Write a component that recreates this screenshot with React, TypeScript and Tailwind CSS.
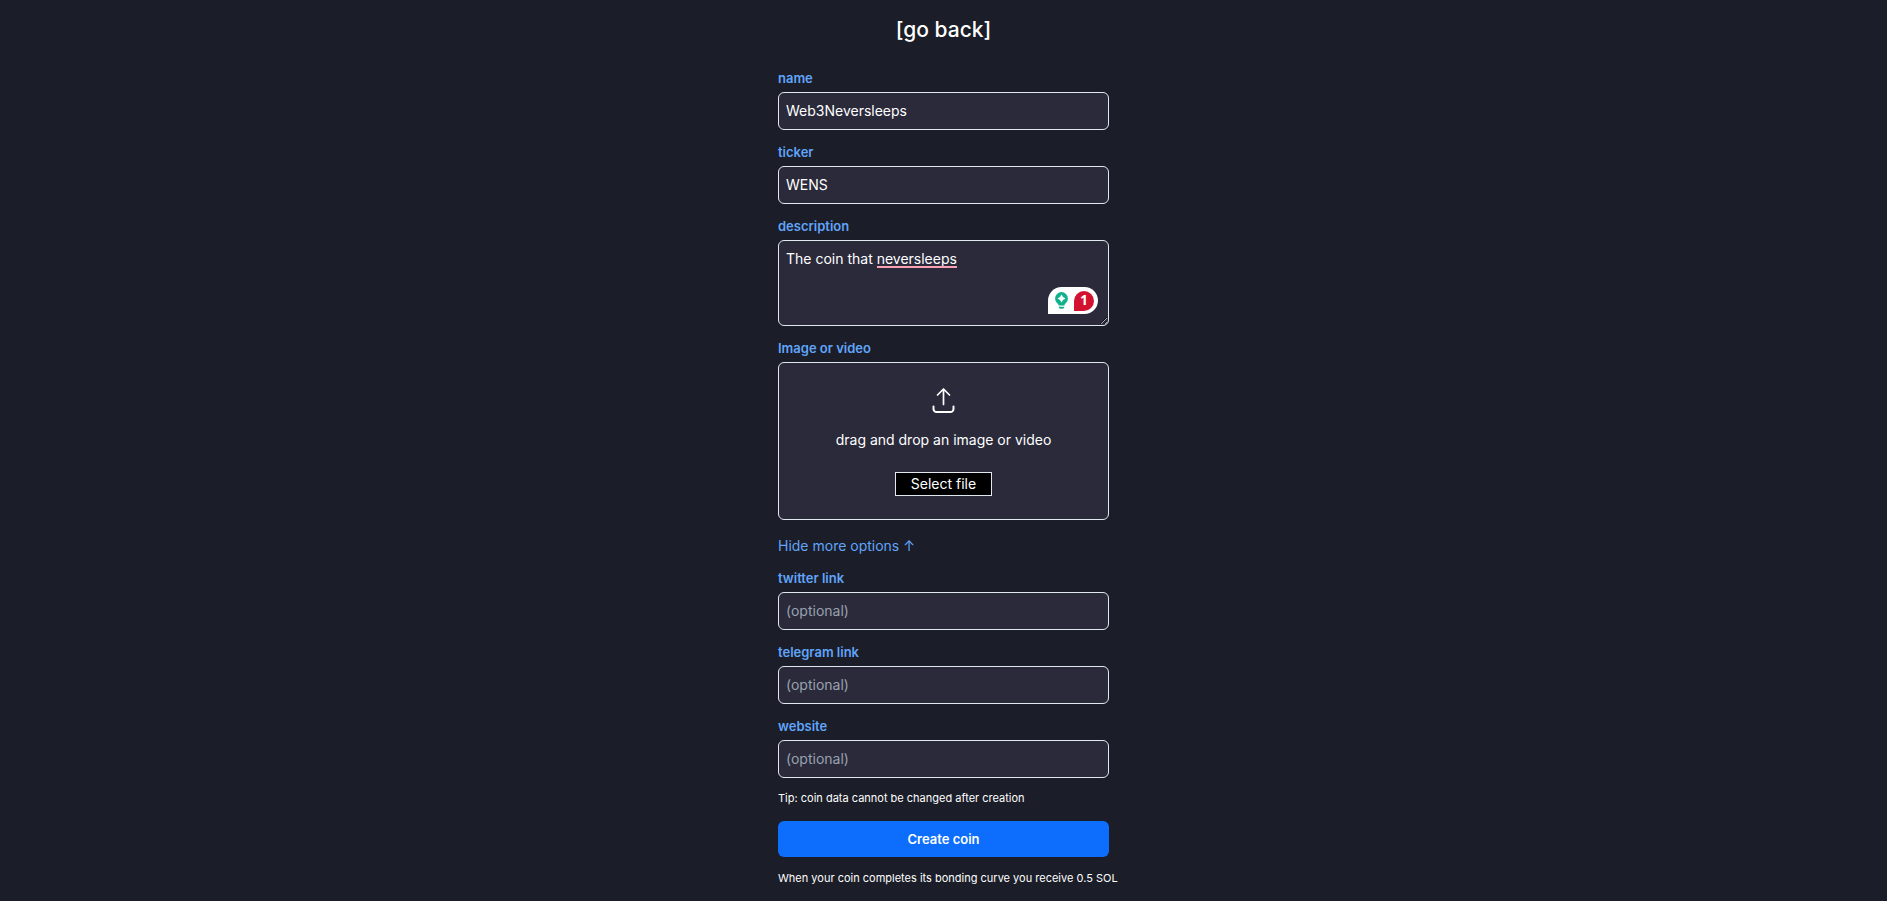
import React, { useRef, useState } from "react";

interface FieldProps {
  id: string;
  label: string;
  value: string;
  placeholder?: string;
  onChange: (value: string) => void;
}

function Field({ id, label, value, placeholder, onChange }: FieldProps) {
  return (
    <div className="flex flex-col gap-1">
      <label htmlFor={id} className="text-[13px] leading-5 font-semibold text-[#60a5fa]">
        {label}
      </label>
      <input
        id={id}
        type="text"
        value={value}
        placeholder={placeholder}
        onChange={(e) => onChange(e.target.value)}
        className="w-full bg-[#2a2a3b] border border-slate-200 rounded-md p-2 pl-[7px] text-sm text-white placeholder:text-gray-400 focus:outline-none"
      />
    </div>
  );
}

function UploadIcon() {
  return (
    <svg
      width="24"
      height="27"
      viewBox="0 0 24 27"
      fill="none"
      stroke="white"
      strokeWidth="2"
      strokeLinecap="round"
      strokeLinejoin="round"
      aria-hidden="true"
    >
      <path d="M11.5 17.5V2M5.5 8l6-6 6 6" strokeWidth="1.7" />
      <path d="M1.5 19.5V22a3 3 0 0 0 3 3h14a3 3 0 0 0 3-3v-2.5" />
    </svg>
  );
}

function WritingBadge() {
  return (
    <div className="absolute right-[11px] bottom-3 flex items-center gap-[6px] h-[27px] w-[50px] pl-[7px] bg-white rounded-full rounded-bl-none">
      <svg width="13" height="17" viewBox="0 0 13 17" aria-hidden="true">
        <circle cx="6.5" cy="6.5" r="6.4" fill="#0fb28c" />
        <path d="M2.5 10h8L9.3 13.6H3.7z" fill="#0fb28c" />
        <path
          d="M6.5 3.4l1 2.1 2.1 1-2.1 1-1 2.1-1-2.1-2.1-1 2.1-1z"
          fill="white"
          stroke="white"
          strokeWidth="1.2"
          strokeLinejoin="round"
        />
        <path d="M3.7 14.7h5.6v.3a1.8 1.8 0 0 1-1.8 1.8h-2a1.8 1.8 0 0 1-1.8-1.8z" fill="#0fb28c" />
      </svg>
      <span className="flex items-center justify-center size-5 bg-[#d3122f] rounded-full rounded-bl-none pb-[2px] font-['Open_Sans',sans-serif] text-sm leading-4 font-bold text-white">
        1
      </span>
    </div>
  );
}

function App() {
  const [name, setName] = useState("Web3Neversleeps");
  const [ticker, setTicker] = useState("WENS");
  const [description, setDescription] = useState("The coin that neversleeps");
  const [twitter, setTwitter] = useState("");
  const [telegram, setTelegram] = useState("");
  const [website, setWebsite] = useState("");
  const [showMore, setShowMore] = useState(true);
  const fileInput = useRef<HTMLInputElement>(null);

  return (
    <main className="min-h-screen bg-[#1b1d28] px-4 pt-[14px] pb-3 font-['Inter',sans-serif] text-white">
      <div className="flex flex-col mx-auto w-full max-w-[331px]">
        <a href="#" className="self-center text-[21px] leading-8 mb-[22px] font-medium">
          [go back]
        </a>

        <form className="flex flex-col gap-3" onSubmit={(e) => e.preventDefault()}>
          <Field id="name" label="name" value={name} onChange={setName} />
          <Field id="ticker" label="ticker" value={ticker} onChange={setTicker} />

          <div className="flex flex-col gap-1">
            <label htmlFor="description" className="text-[13px] leading-5 font-semibold text-[#60a5fa]">
              description
            </label>
            <div className="relative flex">
              <textarea
                id="description"
                spellCheck={false}
                value={description}
                onChange={(e) => setDescription(e.target.value)}
                className="w-full h-[86px] bg-[#2a2a3b] border border-slate-200 rounded-md p-2 pl-[7px] text-sm text-white focus:outline-none"
              />
              {/* spelling mark below the last word */}
              <span className="absolute left-[99px] top-[26px] w-20 h-[2px] bg-[#f9a0b4]" />
              <WritingBadge />
            </div>
          </div>

          <div className="flex flex-col gap-1">
            <label htmlFor="media" className="text-[13px] leading-5 font-semibold text-[#60a5fa]">
              Image or video
            </label>
            <div className="flex flex-col items-center h-[158px] bg-[#2a2a3b] border border-slate-200 rounded-md pt-6">
              <UploadIcon />
              <p className="text-sm mt-4">drag and drop an image or video</p>
              <input ref={fileInput} id="media" type="file" accept="image/*,video/*" className="hidden" />
              <button
                type="button"
                onClick={() => fileInput.current?.click()}
                className="mt-[22px] h-6 px-[15px] bg-black border border-slate-200 text-sm leading-5"
              >
                Select file
              </button>
            </div>
          </div>

          <button
            type="button"
            onClick={() => setShowMore(!showMore)}
            className="self-start mt-1 text-sm text-[#60a5fa]"
          >
            {showMore ? "Hide more options ↑" : "Show more options ↓"}
          </button>

          {showMore && (
            <>
              <Field
                id="twitter"
                label="twitter link"
                placeholder="(optional)"
                value={twitter}
                onChange={setTwitter}
              />
              <Field
                id="telegram"
                label="telegram link"
                placeholder="(optional)"
                value={telegram}
                onChange={setTelegram}
              />
              <Field
                id="website"
                label="website"
                placeholder="(optional)"
                value={website}
                onChange={setWebsite}
              />
            </>
          )}

          <p className="text-[11px] leading-4">Tip: coin data cannot be changed after creation</p>
          <button
            type="submit"
            className="h-9 mt-[3px] bg-[#0d6efd] rounded-md text-[13px] leading-5 font-semibold"
          >
            Create coin
          </button>
          <p className="text-[11px] leading-[18px] whitespace-nowrap">
            When your coin completes its bonding curve you receive 0.5 SOL
          </p>
        </form>
      </div>
    </main>
  );
}

export default App;
